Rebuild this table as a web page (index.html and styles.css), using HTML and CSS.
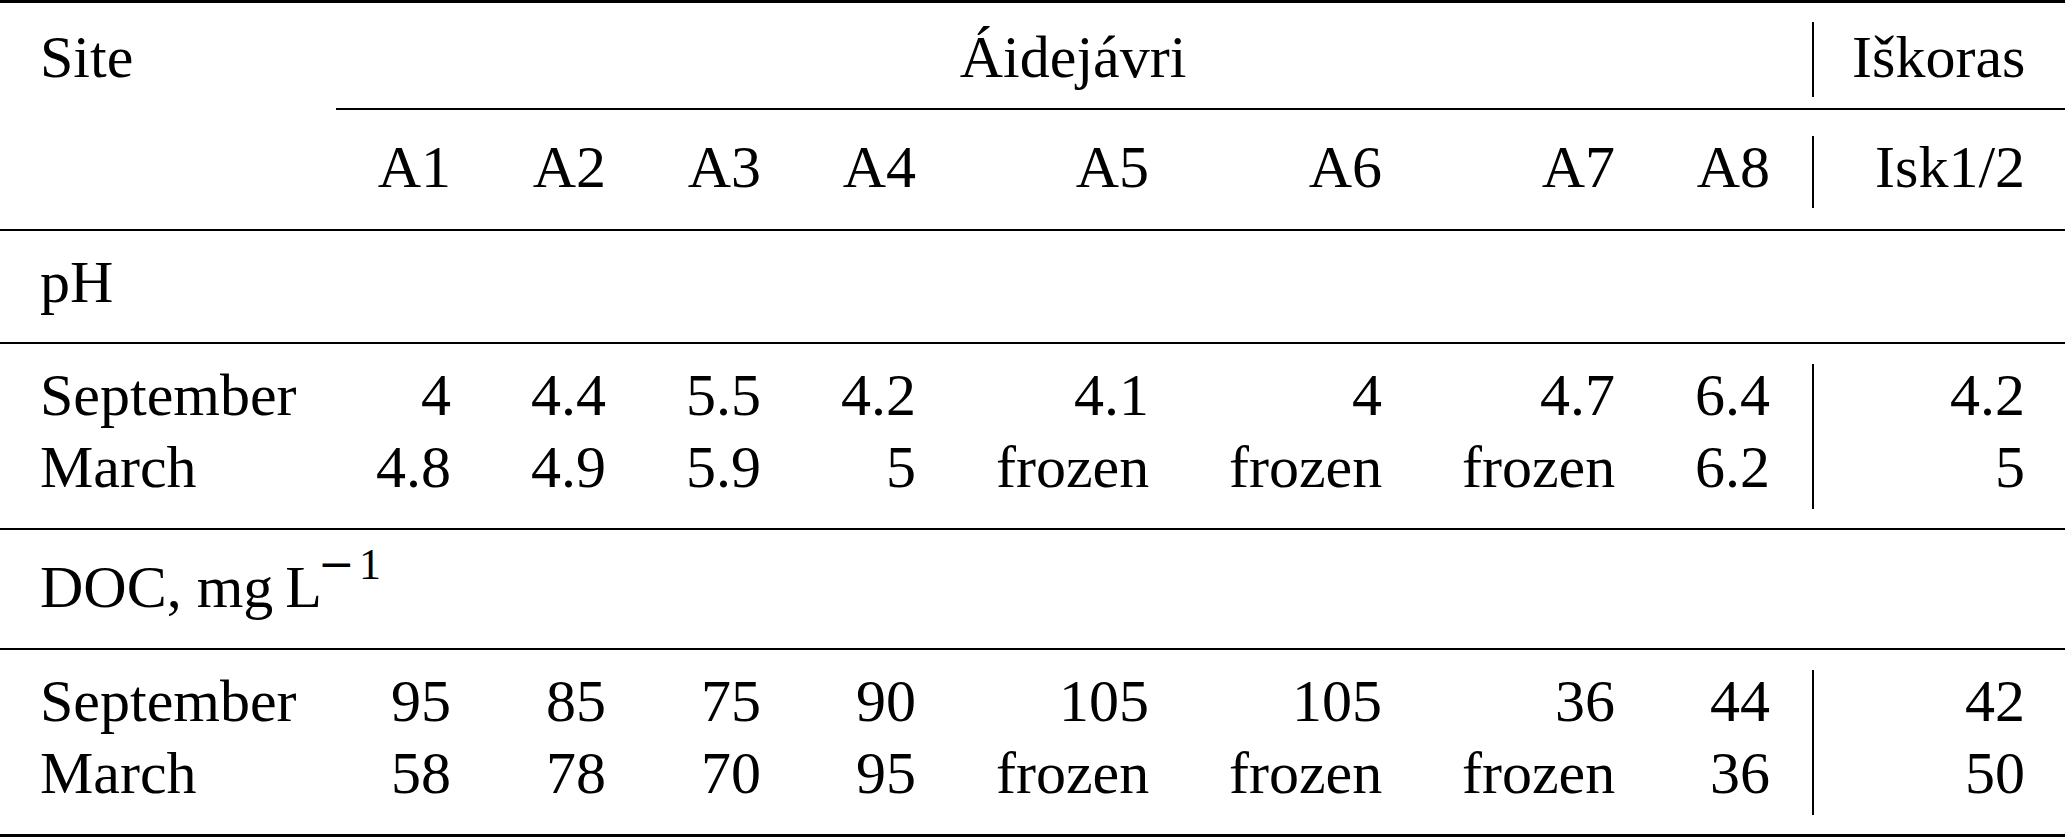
FILE: index.html
```html
<!DOCTYPE html>
<html lang="en">
<head>
    <meta charset="UTF-8">
    <meta name="viewport" content="width=device-width, initial-scale=1.0">
    <title>pH and DOC by site</title>
    <link rel="stylesheet" href="styles.css">
</head>
<body>
    <table class="tab">
        <colgroup>
            <col class="c-name">
            <col class="c-a"><col class="c-a"><col class="c-a"><col class="c-a">
            <col class="c-f"><col class="c-f"><col class="c-f">
            <col class="c-a">
            <col class="c-isk">
        </colgroup>
        <tbody>
            <tr class="r-site">
                <td class="name">Site</td>
                <td class="span" colspan="8">Áidejávri</td>
                <td class="isk">Iškoras</td>
            </tr>
            <tr class="r-head">
                <td class="name"></td>
                <td>A1</td><td>A2</td><td>A3</td><td>A4</td>
                <td>A5</td><td>A6</td><td>A7</td><td>A8</td>
                <td class="isk">Isk1/2</td>
            </tr>

            <tr class="r-group">
                <td class="name" colspan="10">pH</td>
            </tr>
            <tr class="r-first">
                <td class="name">September</td>
                <td>4</td><td>4.4</td><td>5.5</td><td>4.2</td>
                <td>4.1</td><td>4</td><td>4.7</td><td>6.4</td>
                <td class="isk">4.2</td>
            </tr>
            <tr class="r-last">
                <td class="name">March</td>
                <td>4.8</td><td>4.9</td><td>5.9</td><td>5</td>
                <td>frozen</td><td>frozen</td><td>frozen</td><td>6.2</td>
                <td class="isk">5</td>
            </tr>

            <tr class="r-group r-doc">
                <td class="name" colspan="10">DOC, mg&#8201;L<span class="sup"><span class="minus">−</span>1</span></td>
            </tr>
            <tr class="r-first">
                <td class="name">September</td>
                <td>95</td><td>85</td><td>75</td><td>90</td>
                <td>105</td><td>105</td><td>36</td><td>44</td>
                <td class="isk">42</td>
            </tr>
            <tr class="r-last r-end">
                <td class="name">March</td>
                <td>58</td><td>78</td><td>70</td><td>95</td>
                <td>frozen</td><td>frozen</td><td>frozen</td><td>36</td>
                <td class="isk">50</td>
            </tr>
        </tbody>
    </table>
</body>
</html>
```

FILE: styles.css
```css
body {
    margin: 0;
    background: #fff;
    color: #000;
    font-family: "Liberation Serif", "Times New Roman", serif;
}

.tab {
    width: 2065px;
    table-layout: fixed;
    border-collapse: separate;
    border-spacing: 0;
    border-top: 3px solid #000;
    font-size: 60px;
}

.c-name { width: 336px; }
.c-a { width: 155px; }
.c-f { width: 233px; }
.c-isk { width: 255px; }

.tab td {
    padding: 0 40px;
    line-height: 70px;
    text-align: right;
    vertical-align: baseline;
    white-space: nowrap;
}

.tab td.name {
    text-align: left;
}

.tab td.span {
    text-align: center;
}

/* vertical divider before the Iškoras column, with booktabs-like gaps */
.tab td.isk {
    position: relative;
    padding-left: 42px;
}

.tab td.isk::before {
    content: "";
    position: absolute;
    left: 2px;
    width: 2px;
    background: #000;
}

/* header rows */
.r-site td {
    padding-top: 19px;
    padding-bottom: 16px;
}

.r-site .span,
.r-site .isk {
    border-bottom: 2px solid #000;
}

.r-site .isk::before { top: 19px; bottom: 11px; }

.r-head td {
    padding-top: 22px;
    padding-bottom: 27px;
    border-bottom: 2px solid #000;
}

.r-head .isk::before { top: 26px; bottom: 21px; }

/* section titles */
.r-group td {
    padding-top: 16px;
    padding-bottom: 25px;
    border-bottom: 2px solid #000;
}

.r-doc td {
    padding-top: 22px;
    padding-bottom: 26px;
}

.sup {
    font-size: 44px;
    line-height: 0;
    vertical-align: 28px;
    margin-left: -4px;
}

.minus {
    font-family: "DejaVu Serif", serif;
    margin-right: 4px;
}

/* data rows */
.r-first td {
    padding-top: 16px;
}

.r-first .isk::before { top: 20px; bottom: 0; }

.r-last td {
    padding-top: 2px;
    padding-bottom: 26px;
    border-bottom: 2px solid #000;
}

.r-last .isk::before { top: 0; bottom: 19px; }

.r-end td {
    border-bottom-width: 3px;
}
```
